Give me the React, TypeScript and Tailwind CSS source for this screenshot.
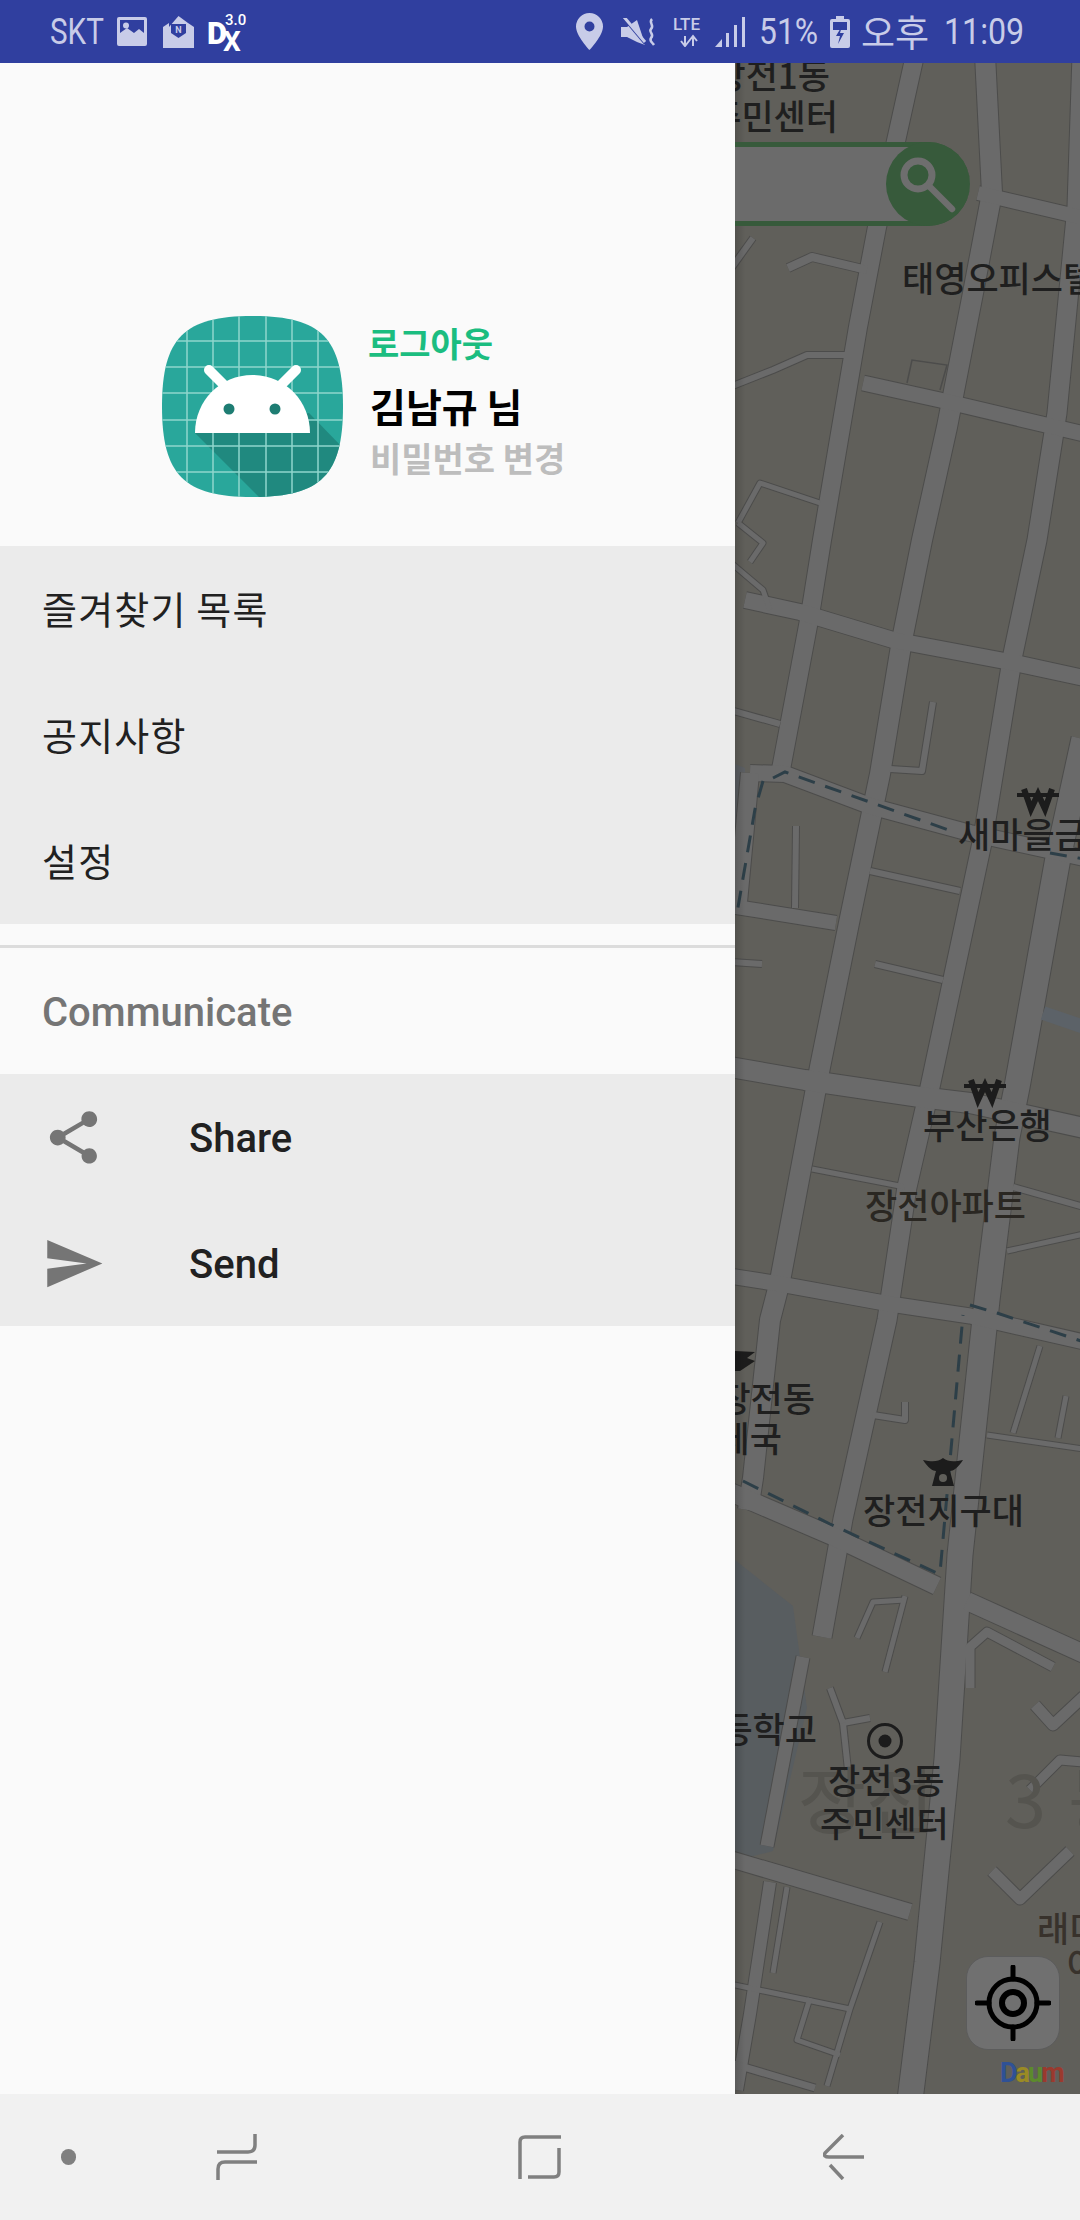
import { Fragment } from 'react';

const CJK = "font-['Noto_Sans_CJK_KR',sans-serif]";
const ROBOTO = "font-['Roboto',sans-serif]";

// wide streets first, thin lanes last
const ROADS: { d: string; w: number }[] = [
  { d: 'M915 55L877 227L858 327L822 540L810 615L782 764L780 774', w: 18 },
  { d: 'M985 55L992 193L973 293L947 427L922 540L902 640L880 774L850 918L820 1067L780 1281L770 1320L753 1478L748 1510', w: 20 },
  { d: 'M1082 55L1077 207L1057 413L1037 540L1013 654L983 838L930 1087L907 1187L887 1320L843 1519L822 1637', w: 19 },
  { d: 'M1084 739L1058 858L1017 1087L1007 1137L987 1300L960 1555L947 1759L927 1963L910 2100', w: 25 },
  { d: 'M978 193L1084 218', w: 14 },
  { d: 'M863 383L940 400L1084 434', w: 15 },
  { d: 'M745 600L800 612L893 640L1010 662L1084 678', w: 16 },
  { d: 'M750 773L785 774L870 806L970 833L1084 858', w: 16 },
  { d: 'M750 773L737 913', w: 18 },
  { d: 'M730 906L836 923', w: 14 },
  { d: 'M730 1067L805 1080L920 1097L970 1103L1084 1128', w: 20 },
  { d: 'M730 1276L780 1284L890 1304L970 1316L1084 1342', w: 15 },
  { d: 'M730 1492L830 1535L937 1586', w: 18 },
  { d: 'M967 1601L1084 1654', w: 18 },
  { d: 'M730 1859L910 1912', w: 16 },
  { d: 'M770 1882L750 2014L737 2090', w: 12 },
];

const LANES: { d: string; w: number }[] = [
  { d: 'M788 268L812 257L867 270', w: 8 },
  { d: 'M730 387L773 370L807 355L852 355', w: 6 },
  { d: 'M738 523L760 483L820 503', w: 5 },
  { d: 'M738 523L763 543L750 562', w: 5 },
  { d: 'M730 270L753 238', w: 6 },
  { d: 'M730 562L763 590L770 610', w: 5 },
  { d: 'M730 710L780 724', w: 6 },
  { d: 'M796 826L795 908', w: 6 },
  { d: 'M933 702L922 771L890 769', w: 6 },
  { d: 'M870 871L960 891', w: 6 },
  { d: 'M875 964L943 980', w: 6 },
  { d: 'M730 962L762 964', w: 6 },
  { d: 'M812 1169L905 1187', w: 5 },
  { d: 'M1013 1187L1084 1207', w: 6 },
  { d: 'M1007 1251L1084 1234', w: 5 },
  { d: 'M873 1415L905 1420L905 1402', w: 6 },
  { d: 'M987 1435L1084 1449', w: 5 },
  { d: 'M1013 1433L1040 1346', w: 5 },
  { d: 'M1058 1438L1066 1396', w: 5 },
  { d: 'M857 1638L873 1602L905 1600', w: 5 },
  { d: 'M885 1672L905 1596', w: 5 },
  { d: 'M830 1688L843 1723L870 1718', w: 6 },
  { d: 'M843 1723L848 1770', w: 6 },
  { d: 'M767 1846L803 1657', w: 13 },
  { d: 'M880 1922L850 2009L827 2086', w: 5 },
  { d: 'M730 1984L850 2009', w: 5 },
  { d: 'M810 1998L797 2040L840 2055', w: 5 },
  { d: 'M787 1887L773 1973', w: 5 },
  { d: 'M730 2063L815 2088', w: 7 },
  { d: 'M970 1688L970 1647L987 1632L1053 1667', w: 9 },
  { d: 'M1035 1705L1053 1725L1084 1696', w: 11 },
  { d: 'M992 1871L1020 1899L1070 1851', w: 11 },
  { d: 'M1030 1790L1060 1760L1084 1762', w: 9 },
];

const DASHES = [
  'M773 778L785 772L957 833',
  'M1050 853L1084 859',
  'M763 781L755 809L737 913',
  'M743 1481L830 1524L937 1573L940 1573L963 1315',
  'M970 1305L997 1313L1084 1342',
];

const LABELS: { text: string; x: number; y: number; anchor?: 'start' | 'end'; fill?: string }[] = [
  { text: '장전1동', x: 830, y: 89, anchor: 'end' },
  { text: '주민센터', x: 838, y: 130, anchor: 'end' },
  { text: '태영오피스텔', x: 902, y: 292 },
  { text: '새마을금고', x: 958, y: 848 },
  { text: '부산은행', x: 923, y: 1139 },
  { text: '장전아파트', x: 865, y: 1219, fill: '#2a2722' },
  { text: '장전동', x: 815, y: 1412, anchor: 'end' },
  { text: '우체국', x: 782, y: 1452, anchor: 'end' },
  { text: '장전지구대', x: 863, y: 1524 },
  { text: '초등학교', x: 817, y: 1743, anchor: 'end' },
  { text: '장전3동', x: 828, y: 1794 },
  { text: '주민센터', x: 820, y: 1837 },
  { text: '래미안', x: 1037, y: 1942, fill: '#38322c' },
  { text: '아파트', x: 1067, y: 1978, fill: '#38322c' },
];

function MapCanvas() {
  return (
    <svg viewBox="735 63 345 2031" className="block h-full w-full">
      <rect x="735" y="63" width="345" height="2031" fill="#605f5a" />
      <path d="M735 1560L793 1606L807 1708L773 1851L735 1861Z" fill="#585d60" />
      <path d="M735 764L745 768L745 830L735 850Z" fill="#5c5f63" />

      {ROADS.map(r => <path key={r.d} d={r.d} fill="none" stroke="#4c4c4b" strokeWidth={r.w + 2} strokeLinejoin="round" />)}
      {LANES.map(r => <path key={r.d} d={r.d} fill="none" stroke="#4c4c4b" strokeWidth={r.w + 2} strokeLinejoin="round" />)}
      {ROADS.map(r => <path key={r.d} d={r.d} fill="none" stroke="#6a6a6a" strokeWidth={r.w} strokeLinejoin="round" />)}
      {LANES.map(r => <path key={r.d} d={r.d} fill="none" stroke="#6a6a6a" strokeWidth={r.w} strokeLinejoin="round" />)}

      <path d="M1043 1013L1084 1027" stroke="#5c6268" strokeWidth="14" />
      <path d="M907 383L912 360L947 365L940 390" fill="none" stroke="#4c4c4b" strokeWidth="1.5" />
      {DASHES.map(d => <path key={d} d={d} fill="none" stroke="#2d3f48" strokeWidth="3" strokeDasharray="17 11" />)}

      {/* faint district name under the labels */}
      <g fontFamily="'Noto Sans CJK KR', sans-serif" fontSize="74" fill="#55544f">
        <text x="798" y="1828">장전</text>
        <text x="1005" y="1828">3</text>
        <text x="1068" y="1828">동</text>
      </g>

      {LABELS.map(l => (
        <text key={l.text + l.x} x={l.x} y={l.y} textAnchor={l.anchor ?? 'start'} fontFamily="'Noto Sans CJK KR', sans-serif" fontWeight="500" fontSize="35" fill={l.fill ?? '#1f1f1f'}>
          {l.text}
        </text>
      ))}

      {/* bank marks */}
      {[[1038, 799], [985, 1090]].map(([x, y]) => (
        <g key={x} fill="none" stroke="#1c1c1c">
          <path d={`M${x - 21} ${y - 4}H${x + 21}`} strokeWidth="4" />
          <path d={`M${x - 14} ${y - 10}L${x - 7} ${y + 10}L${x} ${y - 5}L${x + 7} ${y + 10}L${x + 14} ${y - 10}`} strokeWidth="6" />
        </g>
      ))}

      {/* post office */}
      <path d="M735 1351L755 1352L747 1358L755 1361L740 1371L735 1371Z" fill="#1c1c1c" />

      {/* police */}
      <g fill="#1c1c1c">
        <path d="M923 1460C932 1462 938 1462 943 1458C948 1462 954 1462 963 1460C958 1468 953 1471 950 1471L954 1486H932L936 1471C933 1471 928 1468 923 1460Z" />
        <circle cx="943" cy="1478" r="4" fill="#605f5a" />
      </g>

      {/* community centre */}
      <circle cx="885" cy="1741" r="16.5" fill="none" stroke="#1c1c1c" strokeWidth="3" />
      <circle cx="885" cy="1741" r="6.5" fill="#1c1c1c" />
    </svg>
  );
}

function AppLogo() {
  const lines = [25, 51, 77, 104, 130, 156];
  return (
    <svg viewBox="0 0 181 181" className="h-[181px] w-[181px] shrink-0">
      <defs>
        <clipPath id="squircle">
          <path d="M90.5 0C159 0 181 22 181 90.5C181 159 159 181 90.5 181C22 181 0 159 0 90.5C0 22 22 0 90.5 0Z" />
        </clipPath>
      </defs>
      <g clipPath="url(#squircle)">
        <rect width="181" height="181" fill="#29a79b" />
        <path d="M33 117L97 181H181V132L147 97Z" fill="#1e7f76" fillOpacity="0.75" />
        {lines.map(p => (
          <Fragment key={p}>
            <path d={`M${p} 0V181`} stroke="#8fd6cd" strokeWidth="1.5" />
            <path d={`M0 ${p}H181`} stroke="#8fd6cd" strokeWidth="1.5" />
          </Fragment>
        ))}
      </g>
      <path d="M47 54L63 70M134 54L118 70" stroke="#fff" strokeWidth="10" strokeLinecap="round" />
      <path d="M33 117C33 85 58 59 90.5 59C123 59 148 85 148 117Z" fill="#fff" />
      <circle cx="67" cy="93" r="5.5" fill="#1e7d73" />
      <circle cx="113" cy="93" r="5.5" fill="#1e7d73" />
    </svg>
  );
}

function StatusBar() {
  return (
    <div className={`flex h-[63px] shrink-0 items-center justify-between bg-[#303f9f] pl-[50px] pr-[57px] text-[#c8cce8] ${ROBOTO}`}>
      <div className="flex items-center">
        <span className="inline-block w-[56px] origin-left scale-x-[.8] whitespace-nowrap text-[37px] font-normal leading-none">SKT</span>
        <svg viewBox="0 0 30 29" className="ml-[11px] h-[29px] w-[30px]">
          <path fillRule="evenodd" d="M2 0H28A2 2 0 0 1 30 2V27A2 2 0 0 1 28 29H2A2 2 0 0 1 0 27V2A2 2 0 0 1 2 0ZM3 3V16L10 11L17 16L22 12L27 16V3Z" fill="currentColor" />
          <circle cx="9" cy="8.5" r="3" fill="currentColor" />
        </svg>
        <svg viewBox="0 0 31 32" className="ml-[16px] h-[32px] w-[31px]">
          <path d="M0 11L6 7V11L15.500 0L25 7L31 11V32H0Z" fill="currentColor" />
          <path d="M8 8H23V17L15.500 22L8 17Z" fill="#303f9f" />
          <text x="15.500" y="17" textAnchor="middle" fontFamily="Roboto, sans-serif" fontWeight="700" fontSize="9" fill="currentColor">N</text>
        </svg>
        <svg viewBox="0 0 36 38" className="ml-[14px] h-[38px] w-[36px] overflow-visible text-white">
          <text x="-1" y="31" fontFamily="Roboto, sans-serif" fontWeight="900" fontSize="31" fill="currentColor">D</text>
          <text x="17" y="12" fontFamily="Roboto, sans-serif" fontWeight="500" fontSize="15" fill="currentColor">3.0</text>
          <text x="15" y="38" fontFamily="Roboto, sans-serif" fontWeight="700" fontSize="28" fill="currentColor">X</text>
        </svg>
      </div>
      <div className="flex items-center">
        <svg viewBox="0 0 27 37" className="h-[37px] w-[27px]">
          <path fillRule="evenodd" d="M13.500 0A13.500 13.500 0 0 1 27 13.500C27 23 13.500 37 13.500 37S0 23 0 13.500A13.500 13.500 0 0 1 13.500 0ZM13.500 8.500A5 5 0 1 0 13.500 18.500A5 5 0 0 0 13.500 8.500Z" fill="currentColor" />
        </svg>
        <svg viewBox="0 0 35 28" className="ml-[18px] h-[28px] w-[35px]">
          <path d="M0 9H6L16 2L22 20L24 27L16 24L6 19H0Z" fill="currentColor" />
          <path d="M3 1L24 26" stroke="#303f9f" strokeWidth="2" />
          <path d="M3 -1L24 24" stroke="currentColor" strokeWidth="3" />
          <path d="M31 1C27 5 34 7 30 11C27 14 34 16 30 20C28 23 31 24 33 27" fill="none" stroke="currentColor" strokeWidth="2.500" />
        </svg>
        <svg viewBox="0 0 32 30" className="ml-[17px] h-[30px] w-[32px]">
          <text x="0" y="13" fontFamily="Roboto, sans-serif" fontWeight="500" fontSize="17" fill="currentColor">LTE</text>
          <path d="M12 19V28M8 24L12 29L16 24M20 29V20M16 24L20 19L24 24" fill="none" stroke="currentColor" strokeWidth="2" />
        </svg>
        <svg viewBox="0 0 31 30" className="ml-[10px] h-[30px] w-[31px]">
          <path d="M0 30L7 22V30ZM11 30V16H14V30ZM19 30V8H22V30ZM27 30V0H30V30Z" fill="currentColor" />
        </svg>
        <span className="ml-[13px] inline-block w-[59px] origin-left scale-x-[.86] whitespace-nowrap text-[37px] font-normal leading-none">51%</span>
        <svg viewBox="0 0 20 32" className="ml-[12px] h-[32px] w-[20px]">
          <path fillRule="evenodd" d="M6 0H14V3H18A2 2 0 0 1 20 5V30A2 2 0 0 1 18 32H2A2 2 0 0 1 0 30V5A2 2 0 0 1 2 3H6ZM3 6V14H17V6Z" fill="currentColor" />
          <path d="M12 10L6 20H10L8 28L14 17H10Z" fill="#303f9f" />
        </svg>
        <span className={`ml-[11px] whitespace-nowrap text-[37px] font-normal leading-none ${CJK}`}>오후</span>
        <span className="ml-[15px] inline-block w-[79px] origin-left scale-x-[.87] whitespace-nowrap text-[37px] font-normal leading-none">11:09</span>
      </div>
    </div>
  );
}

function Drawer() {
  return (
    <div className="flex w-[735px] shrink-0 flex-col bg-[#fafafa]">
      {/* Profile header */}
      <div className="flex h-[483px] items-start pl-[162px] pt-[253px]">
        <AppLogo />
        <div className={`ml-[27px] flex flex-col pt-[4px] font-bold ${CJK}`}>
          <span className="ml-[-2px] text-[34px] font-bold leading-[46px] text-[#1bbd80]">로그아웃</span>
          <span className="mt-[14px] text-[39px] leading-[50px] text-black">김남규 님</span>
          <span className="mt-[3px] text-[34px] leading-[50px] text-[#bdbdbd]">비밀번호 변경</span>
        </div>
      </div>

      {/* Main menu */}
      <div className={`bg-[#ebebeb] pl-[42px] text-[#212121] ${CJK}`}>
        {['즐겨찾기 목록', '공지사항', '설정'].map(label => (
          <div key={label} className="flex h-[126px] items-center pb-[3px] text-[38px] tracking-[1.200px]">{label}</div>
        ))}
      </div>

      <div className="mt-[21px] h-[3px] bg-[#dcdcdc]" />

      {/* Communicate */}
      <div className={`flex h-[126px] items-center pl-[42px] pt-[3px] text-[40px] font-medium text-[#757575] ${ROBOTO}`}>Communicate</div>
      <div className={`bg-[#ebebeb] ${ROBOTO}`}>
        <div className="flex h-[126px] items-center pl-[42px]">
          <svg viewBox="0 0 24 24" className="h-[63px] w-[63px]" fill="#757575">
            <path d="M18 16.080c-.76 0-1.440.3-1.960.77L8.910 12.700c.05-.23.09-.46.09-.7s-.04-.47-.09-.7l7.050-4.110c.54.5 1.250.81 2.040.81 1.660 0 3-1.340 3-3s-1.340-3-3-3-3 1.340-3 3c0 .24.04.47.09.7L8.040 9.810C7.500 9.310 6.790 9 6 9c-1.660 0-3 1.340-3 3s1.340 3 3 3c.79 0 1.500-.31 2.040-.81l7.120 4.160c-.05.21-.08.43-.08.65 0 1.610 1.310 2.920 2.920 2.920s2.920-1.310 2.920-2.920-1.310-2.920-2.920-2.920z" />
          </svg>
          <span className="ml-[84px] pt-[3px] text-[40px] font-medium text-[#212121]">Share</span>
        </div>
        <div className="flex h-[126px] items-center pl-[42px]">
          <svg viewBox="0 0 24 24" className="h-[63px] w-[63px]" fill="#757575">
            <path d="M2.010 21L23 12 2.010 3 2 10l15 2-15 2z" />
          </svg>
          <span className="ml-[84px] pt-[3px] text-[40px] font-medium text-[#212121]">Send</span>
        </div>
      </div>
    </div>
  );
}

function MapPanel() {
  return (
    <div className="relative min-w-0 flex-1 overflow-hidden">
      <MapCanvas />
      <div className="absolute inset-y-0 left-0 w-[10px] bg-gradient-to-r from-black/15 to-transparent" />

      {/* search bar, hidden behind the drawer */}
      <div className="absolute left-0 top-[79px] flex h-[84px] w-[235px] items-center justify-end rounded-r-[42px] border-y-[5px] border-[#375a3b] bg-[#6b6b6b]">
        <div className="flex h-[84px] w-[84px] items-center justify-center rounded-full bg-[#375a3b]">
          <svg viewBox="0 0 84 84" className="h-[84px] w-[84px]" fill="none" stroke="#6e6e6e">
            <circle cx="32" cy="33" r="14" strokeWidth="7" />
            <path d="M44 45L66 67" strokeWidth="6.500" strokeLinecap="round" />
          </svg>
        </div>
      </div>

      {/* current location button */}
      <div className="absolute left-[231px] top-[1893px] flex h-[94px] w-[94px] items-center justify-center rounded-[22px] border border-[#5c5c5c] bg-[#707070]">
        <svg viewBox="0 0 76 76" className="h-[76px] w-[76px]" fill="none" stroke="#000">
          <circle cx="38" cy="38" r="24" strokeWidth="5" />
          <circle cx="38" cy="38" r="11" strokeWidth="6" />
          <path d="M38 2V14M38 62V74M2 38H14M62 38H74" strokeWidth="5" strokeLinecap="round" />
        </svg>
      </div>

      {/* Daum logo */}
      <div className={`absolute left-[265px] top-[1992px] text-[27px] font-bold leading-[36px] tracking-[-2px] ${ROBOTO}`}>
        <span className="text-[#2f5196]">D</span>
        <span className="text-[#9a8a24]">a</span>
        <span className="text-[#5c8a2c]">u</span>
        <span className="text-[#9a3a2e]">m</span>
      </div>
    </div>
  );
}

function NavBar() {
  return (
    <div className="flex h-[126px] shrink-0 items-center bg-[#f1f1f1]">
      <div className="ml-[61px] h-[16px] w-[15px] rounded-full bg-[#808080]" />
      <svg viewBox="0 0 42 48" className="ml-[140px] h-[48px] w-[42px]" fill="none" stroke="#808080" strokeWidth="3.500">
        <path d="M39 1V12Q39 19 32 19H1" />
        <path d="M41 29H9Q2 29 2 36V47" />
      </svg>
      <svg viewBox="0 0 43 46" className="ml-[260px] h-[46px] w-[43px]" fill="none" stroke="#808080" strokeWidth="3.500">
        <path d="M43 3H7Q2 3 2 8V45" />
        <path d="M41 14V38Q41 43 36 43H10" />
      </svg>
      <svg viewBox="0 0 42 46" className="ml-[262px] h-[46px] w-[42px]" fill="none" stroke="#808080" strokeWidth="3.500">
        <path d="M20 1L2 19Q0 23 6 23H41" />
        <path d="M7 31L20 45" />
      </svg>
    </div>
  );
}

export default function App() {
  return (
    <div className="flex h-[2220px] w-[1080px] flex-col overflow-hidden">
      <StatusBar />
      <div className="flex min-h-0 flex-1">
        <Drawer />
        <MapPanel />
      </div>
      <NavBar />
    </div>
  );
}
